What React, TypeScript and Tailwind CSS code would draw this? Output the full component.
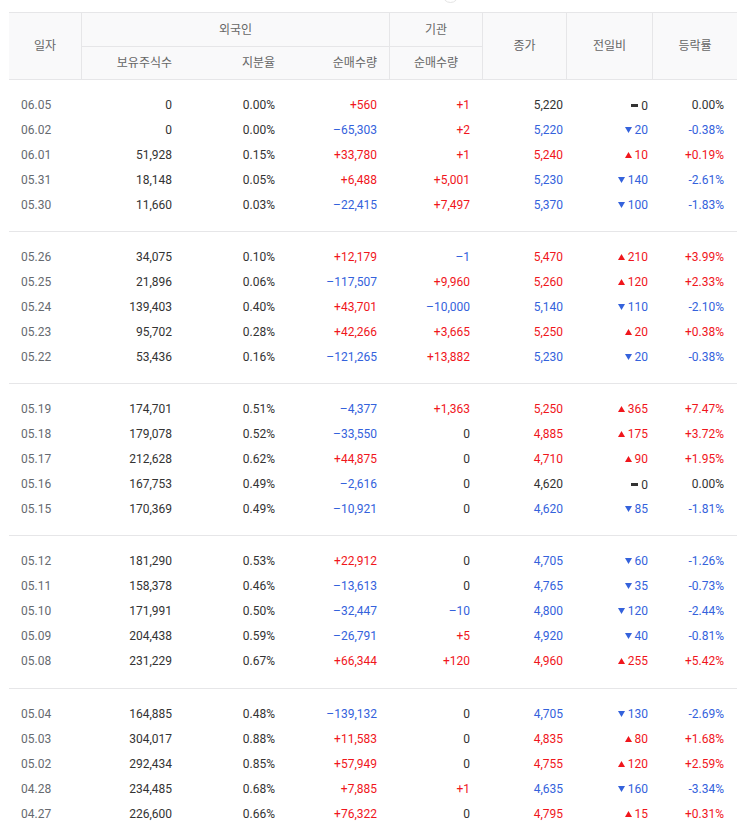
type Dir = "up" | "down" | "flat";

type Row = {
  date: string;
  shares: string;
  ratio: string;
  foreign: string;
  inst: string;
  close: string;
  dir: Dir;
  diff: string;
  rate: string;
};

const r = (
  date: string,
  shares: string,
  ratio: string,
  foreign: string,
  inst: string,
  close: string,
  dir: Dir,
  diff: string,
  rate: string
): Row => ({ date, shares, ratio, foreign, inst, close, dir, diff, rate });

const groups: Row[][] = [
  [
    r("06.05", "0", "0.00%", "+560", "+1", "5,220", "flat", "0", "0.00%"),
    r("06.02", "0", "0.00%", "–65,303", "+2", "5,220", "down", "20", "-0.38%"),
    r("06.01", "51,928", "0.15%", "+33,780", "+1", "5,240", "up", "10", "+0.19%"),
    r("05.31", "18,148", "0.05%", "+6,488", "+5,001", "5,230", "down", "140", "-2.61%"),
    r("05.30", "11,660", "0.03%", "–22,415", "+7,497", "5,370", "down", "100", "-1.83%"),
  ],
  [
    r("05.26", "34,075", "0.10%", "+12,179", "–1", "5,470", "up", "210", "+3.99%"),
    r("05.25", "21,896", "0.06%", "–117,507", "+9,960", "5,260", "up", "120", "+2.33%"),
    r("05.24", "139,403", "0.40%", "+43,701", "–10,000", "5,140", "down", "110", "-2.10%"),
    r("05.23", "95,702", "0.28%", "+42,266", "+3,665", "5,250", "up", "20", "+0.38%"),
    r("05.22", "53,436", "0.16%", "–121,265", "+13,882", "5,230", "down", "20", "-0.38%"),
  ],
  [
    r("05.19", "174,701", "0.51%", "–4,377", "+1,363", "5,250", "up", "365", "+7.47%"),
    r("05.18", "179,078", "0.52%", "–33,550", "0", "4,885", "up", "175", "+3.72%"),
    r("05.17", "212,628", "0.62%", "+44,875", "0", "4,710", "up", "90", "+1.95%"),
    r("05.16", "167,753", "0.49%", "–2,616", "0", "4,620", "flat", "0", "0.00%"),
    r("05.15", "170,369", "0.49%", "–10,921", "0", "4,620", "down", "85", "-1.81%"),
  ],
  [
    r("05.12", "181,290", "0.53%", "+22,912", "0", "4,705", "down", "60", "-1.26%"),
    r("05.11", "158,378", "0.46%", "–13,613", "0", "4,765", "down", "35", "-0.73%"),
    r("05.10", "171,991", "0.50%", "–32,447", "–10", "4,800", "down", "120", "-2.44%"),
    r("05.09", "204,438", "0.59%", "–26,791", "+5", "4,920", "down", "40", "-0.81%"),
    r("05.08", "231,229", "0.67%", "+66,344", "+120", "4,960", "up", "255", "+5.42%"),
  ],
  [
    r("05.04", "164,885", "0.48%", "–139,132", "0", "4,705", "down", "130", "-2.69%"),
    r("05.03", "304,017", "0.88%", "+11,583", "0", "4,835", "up", "80", "+1.68%"),
    r("05.02", "292,434", "0.85%", "+57,949", "0", "4,755", "up", "120", "+2.59%"),
    r("04.28", "234,485", "0.68%", "+7,885", "+1", "4,635", "down", "160", "-3.34%"),
    r("04.27", "226,600", "0.66%", "+76,322", "0", "4,795", "up", "15", "+0.31%"),
  ],
];

const cols = "grid grid-cols-[72px_103px_102px_103px_93px_84px_86px_85px]";

// sign of a value decides its colour
function tone(v: string) {
  if (v.startsWith("+")) return "text-[#f0161c]";
  if (v.startsWith("–") || v.startsWith("-")) return "text-[#3462dc]";
  return "text-[#333]";
}

function dirTone(d: Dir) {
  if (d === "up") return "text-[#f0161c]";
  if (d === "down") return "text-[#3462dc]";
  return "text-[#333]";
}

function Diff({ dir, value }: { dir: Dir; value: string }) {
  return (
    <span className={`inline-flex items-center gap-[3px] ${dirTone(dir)}`}>
      {dir === "up" && (
        <svg width="7" height="6" viewBox="0 0 7 6">
          <path d="M3.5 0 L7 6 L0 6 Z" fill="currentColor" />
        </svg>
      )}
      {dir === "down" && (
        <svg width="7" height="6" viewBox="0 0 7 6">
          <path d="M0 0 L7 0 L3.5 6 Z" fill="currentColor" />
        </svg>
      )}
      {dir === "flat" && <span className="inline-block w-[7px] h-[3px] bg-[#333]" />}
      {value}
    </span>
  );
}

function DataRow({ row }: { row: Row }) {
  return (
    <div className={`${cols} h-[25px] items-center text-[12px] text-[#333]`}>
      <div className="pl-[12px] text-[#666a70]">{row.date}</div>
      <div className="text-right pr-[12px]">{row.shares}</div>
      <div className="text-right pr-[11px]">{row.ratio}</div>
      <div className={`text-right pr-[12px] ${tone(row.foreign)}`}>{row.foreign}</div>
      <div className={`text-right pr-[12px] ${tone(row.inst)}`}>{row.inst}</div>
      <div className={`text-right pr-[3px] ${dirTone(row.dir)}`}>{row.close}</div>
      <div className="text-right pr-[4px]">
        <Diff dir={row.dir} value={row.diff} />
      </div>
      <div className={`text-right pr-[13px] ${dirTone(row.dir)}`}>{row.rate}</div>
    </div>
  );
}

export default function App() {
  return (
    <div
      className="relative min-h-[840px] bg-white pt-[12px] pl-[9px] overflow-hidden"
      style={{ fontFamily: 'Roboto, "Noto Sans CJK KR", "Noto Sans", sans-serif' }}
    >
      <div className="absolute left-[442px] top-[-14px] w-[17px] h-[17px] rounded-full border border-[#e4e4e4] bg-white" />
      <div className="w-[728px]">
        <div
          className={`${cols} grid-rows-[34px_32px] bg-[#f9f9fa] border-y border-[#e6e6e8] text-[12px] text-[#666]`}
        >
          <div className="row-span-2 flex items-center justify-center">일자</div>
          <div className="col-span-3 flex items-center justify-center border-l border-b border-[#e6e6e8]">
            외국인
          </div>
          <div className="flex items-center justify-center border-l border-b border-[#e6e6e8]">기관</div>
          <div className="row-span-2 flex items-center justify-center border-l border-[#e6e6e8]">종가</div>
          <div className="row-span-2 flex items-center justify-center border-l border-[#e6e6e8]">전일비</div>
          <div className="row-span-2 flex items-center justify-center border-l border-[#e6e6e8]">등락률</div>
          <div className="flex items-center justify-end pr-[12px] border-l border-[#e6e6e8]">보유주식수</div>
          <div className="flex items-center justify-end pr-[11px]">지분율</div>
          <div className="flex items-center justify-end pr-[12px]">순매수량</div>
          <div className="flex items-center justify-center border-l border-[#e6e6e8]">순매수량</div>
        </div>
        {groups.map((g, i) => (
          <div
            key={i}
            className={`pt-[12px] border-b border-[#e6e6e8] ${i === 3 ? "pb-[15px]" : "pb-[14px]"}`}
          >
            {g.map((row) => (
              <DataRow key={row.date} row={row} />
            ))}
          </div>
        ))}
      </div>
    </div>
  );
}
